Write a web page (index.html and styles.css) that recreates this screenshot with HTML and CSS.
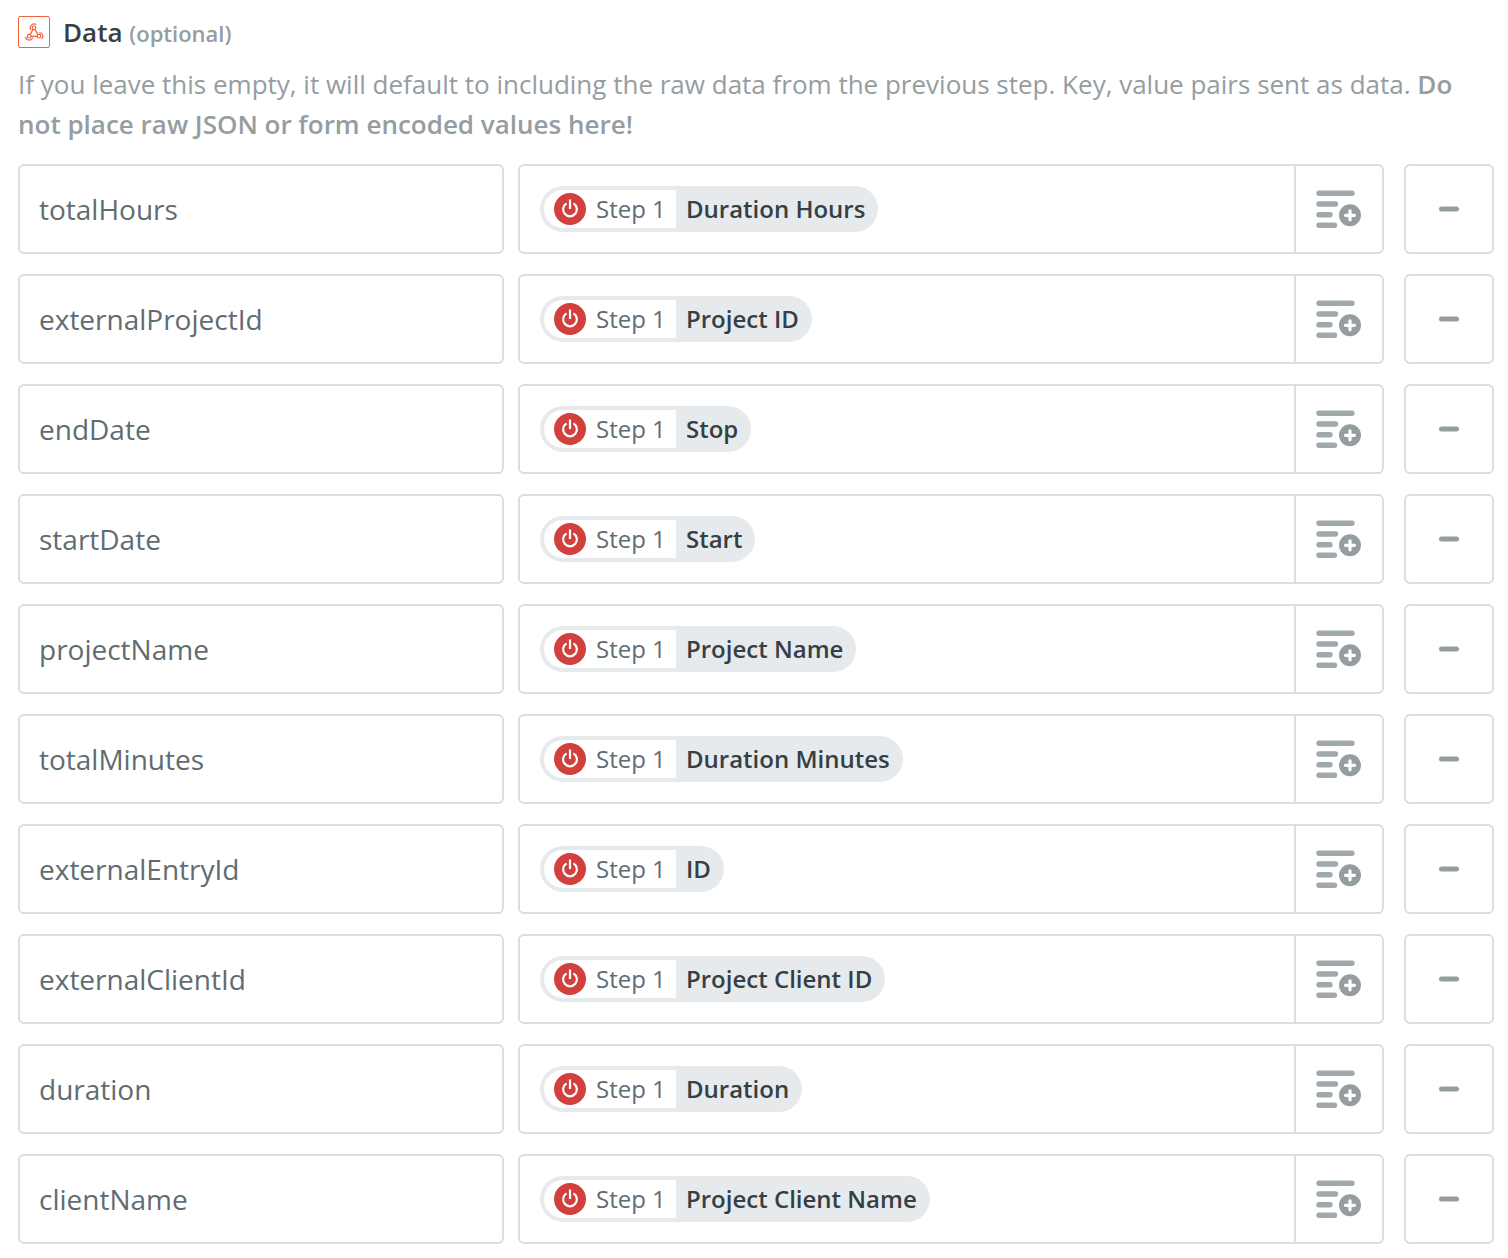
FILE: index.html
```html
<!DOCTYPE html>
<html lang="en">
<head>
<meta charset="utf-8">
<meta name="viewport" content="width=device-width, initial-scale=1">
<title>Data</title>
<link rel="stylesheet" href="styles.css">
</head>
<body>
<svg class="sprite" aria-hidden="true">
  <symbol id="power" viewBox="0 0 32 32">
    <circle cx="16" cy="16" r="16" fill="#d1403c"/>
    <path d="M12.6 10.400a6.900 6.900 0 1 0 6.800 0M16 6.500v9.500" fill="none" stroke="#fff" stroke-width="2.200"/>
  </symbol>
  <symbol id="insert" viewBox="0 0 46 38">
    <path d="M3 3.3h33M3 14h16.500M3 24.800h11M3 35.300h15.500" fill="none" stroke="#a0a9ac" stroke-width="5.400" stroke-linecap="round"/>
    <circle cx="34" cy="25.300" r="11" fill="#959da1"/>
    <path d="M34 20.800v9M29.500 25.300h9" fill="none" stroke="#fff" stroke-width="3.200" stroke-linecap="round"/>
  </symbol>
  <symbol id="minus" viewBox="0 0 20 6">
    <path d="M2.500 3h15" stroke="#959da1" stroke-width="5" stroke-linecap="round"/>
  </symbol>
</svg>
<main class="field">
  <header class="field-head">
    <span class="app-icon">
      <svg viewBox="0 0 20 20" width="20" height="20" fill="none" stroke="#f0623a" stroke-width="1.200" aria-hidden="true">
        <circle cx="10" cy="5.800" r="1.800"/>
        <circle cx="5.200" cy="14.200" r="1.800"/>
        <circle cx="15" cy="14.200" r="1.800"/>
        <path d="M9.100 7.400 6.100 12.600M10.900 7.400l3.200 5.200M7 14.300h6.200"/>
        <path d="M6.900 8.100a3.900 3.900 0 0 1 5.300-5.500M1.500 14.800a3.800 3.800 0 0 0 7.300.8M15.300 10.500a3.800 3.800 0 0 1 2.400 6.500"/>
      </svg>
    </span>
    <h1 class="title">Data <span class="optional">(optional)</span></h1>
  </header>
  <p class="help">If you leave this empty, it will default to including the raw data from the previous step. Key, value pairs sent as data. <strong>Do not place raw JSON or form encoded values here!</strong></p>
  <div class="rows">
    <div class="row">
      <input class="key" type="text" value="totalHours" aria-label="Key 1">
      <div class="value">
        <div class="editor"><span class="pill"><span class="step"><svg class="power"><use href="#power"/></svg>Step 1</span><span class="name">Duration Hours</span></span></div>
        <button class="insert" type="button" aria-label="Insert a field"><svg><use href="#insert"/></svg></button>
      </div>
      <button class="remove" type="button" aria-label="Remove row"><svg><use href="#minus"/></svg></button>
    </div>
    <div class="row">
      <input class="key" type="text" value="externalProjectId" aria-label="Key 2">
      <div class="value">
        <div class="editor"><span class="pill"><span class="step"><svg class="power"><use href="#power"/></svg>Step 1</span><span class="name">Project ID</span></span></div>
        <button class="insert" type="button" aria-label="Insert a field"><svg><use href="#insert"/></svg></button>
      </div>
      <button class="remove" type="button" aria-label="Remove row"><svg><use href="#minus"/></svg></button>
    </div>
    <div class="row">
      <input class="key" type="text" value="endDate" aria-label="Key 3">
      <div class="value">
        <div class="editor"><span class="pill"><span class="step"><svg class="power"><use href="#power"/></svg>Step 1</span><span class="name">Stop</span></span></div>
        <button class="insert" type="button" aria-label="Insert a field"><svg><use href="#insert"/></svg></button>
      </div>
      <button class="remove" type="button" aria-label="Remove row"><svg><use href="#minus"/></svg></button>
    </div>
    <div class="row">
      <input class="key" type="text" value="startDate" aria-label="Key 4">
      <div class="value">
        <div class="editor"><span class="pill"><span class="step"><svg class="power"><use href="#power"/></svg>Step 1</span><span class="name">Start</span></span></div>
        <button class="insert" type="button" aria-label="Insert a field"><svg><use href="#insert"/></svg></button>
      </div>
      <button class="remove" type="button" aria-label="Remove row"><svg><use href="#minus"/></svg></button>
    </div>
    <div class="row">
      <input class="key" type="text" value="projectName" aria-label="Key 5">
      <div class="value">
        <div class="editor"><span class="pill"><span class="step"><svg class="power"><use href="#power"/></svg>Step 1</span><span class="name">Project Name</span></span></div>
        <button class="insert" type="button" aria-label="Insert a field"><svg><use href="#insert"/></svg></button>
      </div>
      <button class="remove" type="button" aria-label="Remove row"><svg><use href="#minus"/></svg></button>
    </div>
    <div class="row">
      <input class="key" type="text" value="totalMinutes" aria-label="Key 6">
      <div class="value">
        <div class="editor"><span class="pill"><span class="step"><svg class="power"><use href="#power"/></svg>Step 1</span><span class="name">Duration Minutes</span></span></div>
        <button class="insert" type="button" aria-label="Insert a field"><svg><use href="#insert"/></svg></button>
      </div>
      <button class="remove" type="button" aria-label="Remove row"><svg><use href="#minus"/></svg></button>
    </div>
    <div class="row">
      <input class="key" type="text" value="externalEntryId" aria-label="Key 7">
      <div class="value">
        <div class="editor"><span class="pill"><span class="step"><svg class="power"><use href="#power"/></svg>Step 1</span><span class="name">ID</span></span></div>
        <button class="insert" type="button" aria-label="Insert a field"><svg><use href="#insert"/></svg></button>
      </div>
      <button class="remove" type="button" aria-label="Remove row"><svg><use href="#minus"/></svg></button>
    </div>
    <div class="row">
      <input class="key" type="text" value="externalClientId" aria-label="Key 8">
      <div class="value">
        <div class="editor"><span class="pill"><span class="step"><svg class="power"><use href="#power"/></svg>Step 1</span><span class="name">Project Client ID</span></span></div>
        <button class="insert" type="button" aria-label="Insert a field"><svg><use href="#insert"/></svg></button>
      </div>
      <button class="remove" type="button" aria-label="Remove row"><svg><use href="#minus"/></svg></button>
    </div>
    <div class="row">
      <input class="key" type="text" value="duration" aria-label="Key 9">
      <div class="value">
        <div class="editor"><span class="pill"><span class="step"><svg class="power"><use href="#power"/></svg>Step 1</span><span class="name">Duration</span></span></div>
        <button class="insert" type="button" aria-label="Insert a field"><svg><use href="#insert"/></svg></button>
      </div>
      <button class="remove" type="button" aria-label="Remove row"><svg><use href="#minus"/></svg></button>
    </div>
    <div class="row">
      <input class="key" type="text" value="clientName" aria-label="Key 10">
      <div class="value">
        <div class="editor"><span class="pill"><span class="step"><svg class="power"><use href="#power"/></svg>Step 1</span><span class="name">Project Client Name</span></span></div>
        <button class="insert" type="button" aria-label="Insert a field"><svg><use href="#insert"/></svg></button>
      </div>
      <button class="remove" type="button" aria-label="Remove row"><svg><use href="#minus"/></svg></button>
    </div>
  </div>
</main>
</body>
</html>
```
FILE: styles.css
```css
* {
  box-sizing: border-box;
}

body {
  margin: 0;
  background: #fff;
  color: #5f6c72;
  font-family: "Open Sans", "Noto Sans", sans-serif;
}

button,
input {
  margin: 0;
  font: inherit;
  color: inherit;
}

.sprite {
  display: none;
}

.field {
  padding: 16px 14px 14px 18px;
}

.field-head {
  display: flex;
  align-items: center;
  gap: 13px;
  height: 32px;
}

.app-icon {
  display: flex;
  align-items: center;
  justify-content: center;
  width: 32px;
  height: 32px;
  border: 1px solid #f0623a;
  border-radius: 2px;
}

.title {
  margin: 0;
  color: #354044;
  font-size: 26px;
  font-weight: 600;
  line-height: 32px;
}

.optional {
  color: #959da1;
  font-size: 22px;
}

.help {
  margin: 16px 0 20px;
  color: #959da1;
  font-size: 26px;
  line-height: 40px;
}

.help strong {
  font-weight: 600;
}

.rows {
  display: grid;
  gap: 20px;
}

.row {
  display: grid;
  grid-template-columns: minmax(0, 486fr) minmax(0, 872fr) 90px;
  column-gap: 14px;
  height: 90px;
}

.key,
.value,
.remove {
  border: 2px solid #d9dee2;
  border-radius: 6px;
  background: #fff;
}

.key {
  width: 100%;
  padding: 0 19px;
  font-size: 28px;
}

.value {
  display: flex;
  margin-right: 6px;
}

.editor {
  display: flex;
  flex: 1;
  align-items: center;
  min-width: 0;
  padding: 0 20px;
}

.pill {
  display: flex;
  height: 46px;
  padding: 4px;
  border-radius: 23px;
  background: #e6eaed;
  font-size: 24px;
  line-height: 38px;
  white-space: nowrap;
}

.step {
  display: flex;
  align-items: center;
  gap: 10px;
  width: 132px;
  padding-left: 10px;
  border-radius: 19px 0 0 19px;
  background: #fff;
}

.power {
  width: 32px;
  height: 32px;
}

.name {
  padding: 0 9px 0 10px;
  color: #354044;
  font-weight: 600;
}

.insert {
  display: flex;
  align-items: center;
  justify-content: center;
  width: 88px;
  padding: 0;
  border: 0;
  border-left: 2px solid #d9dee2;
  background: none;
}

.insert svg {
  width: 46px;
  height: 38px;
}

.remove {
  display: flex;
  align-items: center;
  justify-content: center;
  padding: 0;
}

.remove svg {
  width: 20px;
  height: 6px;
}
```
